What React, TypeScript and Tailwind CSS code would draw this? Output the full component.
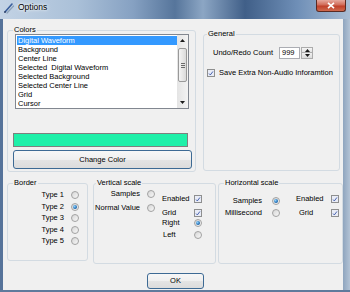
import type { ReactNode } from "react";

const colorItems = [
  "Digital Waveform",
  "Background",
  "Center Line",
  "Selected  Digital Waveform",
  "Selected Background",
  "Selected Center Line",
  "Grid",
  "Cursor",
];

function Radio({ on = false }: { on?: boolean }) {
  return (
    <span className="flex h-[8px] w-[8px] shrink-0 items-center justify-center rounded-full border border-[#a2a2a2] bg-[linear-gradient(135deg,#d6d6d6,#f8f8f8)]">
      {on && (
        <span className="h-[4px] w-[4px] rounded-full bg-[radial-gradient(circle_at_35%_35%,#8fd3ff,#0e5aa4_75%)]" />
      )}
    </span>
  );
}

function Check() {
  return (
    <span className="flex h-[8px] w-[8px] shrink-0 items-center justify-center border border-[#8e8f8f] bg-[#e9ecf6]">
      <svg viewBox="0 0 8 8" className="h-[7px] w-[7px]">
        <path d="M1.4 4.1 L3.1 5.9 L6.6 1.3" fill="none" stroke="#3652a6" strokeWidth="1.2" />
      </svg>
    </span>
  );
}

function Tri({ up = false }: { up?: boolean }) {
  return (
    <svg viewBox="0 0 5 3" className="h-[3px] w-[5px]">
      <path d={up ? "M0 3 L2.5 0 L5 3 Z" : "M0 0 L2.5 3 L5 0 Z"} fill="#1a1a1a" />
    </svg>
  );
}

function Group({
  title,
  className,
  legend,
  children,
}: {
  title: string;
  className: string;
  legend: string;
  children: ReactNode;
}) {
  return (
    <fieldset className={`shrink-0 rounded-[3px] border border-[#d3dbe2] ${className}`}>
      <legend className={`px-[1px] leading-[10px] ${legend}`}>{title}</legend>
      {children}
    </fieldset>
  );
}

function WinButton({ label, className }: { label: string; className: string }) {
  return (
    <button
      className={`flex items-center justify-center rounded-[3px] border border-[#3d6a94] bg-[linear-gradient(180deg,#f7f7f7_0%,#efefef_50%,#e4e4e4_51%,#dcdcdc_100%)] text-[7.5px] leading-[10px] text-black ${className}`}
    >
      {label}
    </button>
  );
}

export default function App() {
  return (
    <div className="flex h-[292px] w-[350px] flex-col overflow-hidden bg-[#6d87a6] font-['Liberation_Sans',Arial,sans-serif] text-[7.5px] text-black">
      {/* Title bar */}
      <div className="flex h-[19px] shrink-0 items-start bg-[linear-gradient(90deg,#c3d3e5_0%,#aac0d8_22%,#86a1c2_38%,#56759b_50%,#8ca6c4_58%,#405f88_70%,#6f8fb7_85%,#a9bdd4_100%)]">
        <svg viewBox="0 0 12 12" className="ml-[3px] mt-[2px] h-[12px] w-[12px]">
          <path d="M2 10 L9 2" stroke="#3a5e9c" strokeWidth="1.6" strokeLinecap="round" />
          <path d="M4 11 L10.5 4" stroke="#8aa0b8" strokeWidth="1.2" strokeLinecap="round" />
          <path d="M1.5 10.5 L2.5 9.5" stroke="#1d2d4a" strokeWidth="1.2" />
        </svg>
        <span className="ml-[3px] mt-[2px] text-[8.5px] leading-[11px] [text-shadow:0_0_4px_#ffffff,0_0_2px_#ffffff]">
          Options
        </span>
        <div className="ml-auto mr-[4px] flex h-[12px] w-[30px] items-center justify-center rounded-b-[3px] border border-t-0 border-[#5a2a22] bg-[linear-gradient(180deg,#e6a99e_0%,#d16b58_45%,#c0402a_55%,#cf6a4e_100%)]">
          <svg viewBox="0 0 8 7" className="h-[7px] w-[8px]">
            <path d="M1 0.8 L7 6.2 M7 0.8 L1 6.2" stroke="#ffffff" strokeWidth="1.6" />
          </svg>
        </div>
      </div>

      {/* Body */}
      <div className="flex h-[271px] shrink-0">
        <div className="w-[3px] bg-[#56739a]" />
        <div className="flex w-[340px] flex-col bg-[#f0f0f0]">
          {/* Top row */}
          <div className="flex h-[153px] items-start">
            <Group title="Colors" className="ml-[4px] mt-[6px] h-[147px] w-[189px]" legend="ml-[5px]">
              <div className="ml-[7px] mt-[-1px] flex h-[75px] w-[174px] border border-[#828790] bg-white">
                <div className="flex-1 pl-[1px] pt-[1px]">
                  {colorItems.map((t, i) => (
                    <div
                      key={t}
                      className={`h-[9px] whitespace-pre pl-[1px] leading-[9px] ${
                        i === 0 ? "bg-[#3399ff] text-white" : "text-black"
                      }`}
                    >
                      {t}
                    </div>
                  ))}
                </div>
                <div className="flex w-[11px] flex-col bg-[linear-gradient(90deg,#e4e4e4,#f3f3f3)]">
                  <div className="flex h-[11px] items-center justify-center">
                    <Tri up />
                  </div>
                  <div className="mx-[1px] mt-[2px] flex h-[34px] flex-col items-center justify-center gap-[1px] rounded-[2px] border border-[#999999] bg-[linear-gradient(90deg,#f4f4f4,#dadada)]">
                    <span className="h-px w-[4px] bg-[#6b6b6b]" />
                    <span className="h-px w-[4px] bg-[#6b6b6b]" />
                    <span className="h-px w-[4px] bg-[#6b6b6b]" />
                  </div>
                  <div className="flex-1" />
                  <div className="flex h-[11px] items-center justify-center">
                    <Tri />
                  </div>
                </div>
              </div>
              <div className="ml-[5px] mt-[24px] h-[14px] w-[175px] border border-[#7f7f7f] bg-[#1ff0a9]" />
              <WinButton label="Change Color" className="ml-[5px] mt-[3px] h-[19px] w-[179px]" />
            </Group>

            <Group title="General" className="ml-[7px] mt-[10px] h-[142px] w-[137px]" legend="ml-[3px]">
              <div className="ml-[9px] mt-[8px] flex items-center">
                <span className="w-[66px] leading-[10px]">Undo/Redo Count</span>
                <div className="h-[12px] w-[21px] border border-[#abadb3] bg-white pl-[2px] leading-[10px]">
                  999
                </div>
                <div className="ml-[1px] flex h-[12px] w-[12px] flex-col">
                  <div className="flex h-[6px] items-center justify-center border border-[#acacac] bg-[linear-gradient(180deg,#f6f6f6,#e2e2e2)]">
                    <Tri up />
                  </div>
                  <div className="flex h-[6px] items-center justify-center border border-t-0 border-[#acacac] bg-[linear-gradient(180deg,#f0f0f0,#dcdcdc)]">
                    <Tri />
                  </div>
                </div>
              </div>
              <div className="ml-[3px] mt-[9px] flex h-[10px] items-center">
                <Check />
                <span className="ml-[4px] leading-[10px]">Save Extra Non-Audio Inforamtion</span>
              </div>
            </Group>
          </div>

          {/* Bottom row */}
          <div className="mt-[6px] flex h-[86px] items-start">
            <Group title="Border" className="ml-[4px] h-[83px] w-[81px]" legend="ml-[5px]">
              <div className="mt-[1.5px]">
                {[1, 2, 3, 4, 5].map((n) => (
                  <div key={n} className="flex h-[11.5px] items-center">
                    <span className="w-[56px] text-right leading-[10px]">Type {n}</span>
                    <span className="ml-[7px]">
                      <Radio on={n === 2} />
                    </span>
                  </div>
                ))}
              </div>
            </Group>

            <Group title="Vertical scale" className="ml-[5px] h-[86px] w-[123px]" legend="ml-[2px]">
              <div className="flex">
                <div className="flex flex-col gap-[2px]">
                  <div className="flex h-[12px] items-center">
                    <span className="w-[46px] text-right leading-[10px]">Samples</span>
                    <span className="ml-[7px]">
                      <Radio />
                    </span>
                  </div>
                  <div className="flex h-[12px] items-center">
                    <span className="w-[46px] text-right leading-[10px]">Normal Value</span>
                    <span className="ml-[7px]">
                      <Radio />
                    </span>
                  </div>
                </div>
                <div className="ml-[7px] flex flex-col">
                  <div className="mt-[6px] flex h-[10px] items-center">
                    <span className="w-[32px] leading-[10px]">Enabled</span>
                    <Check />
                  </div>
                  <div className="mt-[4px] flex h-[10px] items-center">
                    <span className="w-[32px] leading-[10px]">Grid</span>
                    <Check />
                  </div>
                  <div className="flex h-[10px] items-center">
                    <span className="w-[32px] leading-[10px]">Right</span>
                    <Radio on />
                  </div>
                  <div className="mt-[2px] flex h-[10px] items-center">
                    <span className="w-[32px] pl-[1px] leading-[10px]">Left</span>
                    <Radio />
                  </div>
                </div>
              </div>
            </Group>

            <Group title="Horizontal scale" className="ml-[2px] h-[86px] w-[125px]" legend="ml-[5px]">
              <div className="flex">
                <div className="flex flex-col">
                  <div className="mt-[8px] flex h-[10px] items-center">
                    <span className="w-[43px] text-right leading-[10px]">Samples</span>
                    <span className="ml-[10px]">
                      <Radio on />
                    </span>
                  </div>
                  <div className="mt-[2px] flex h-[10px] items-center">
                    <span className="w-[43px] text-right leading-[10px]">Millisecond</span>
                    <span className="ml-[10px]">
                      <Radio />
                    </span>
                  </div>
                </div>
                <div className="ml-[16px] flex flex-col">
                  <div className="mt-[6px] flex h-[10px] items-center">
                    <span className="w-[35px] leading-[10px]">Enabled</span>
                    <Check />
                  </div>
                  <div className="mt-[4px] flex h-[10px] items-center">
                    <span className="w-[35px] pl-[3px] leading-[10px]">Grid</span>
                    <Check />
                  </div>
                </div>
              </div>
            </Group>
          </div>

          <WinButton label="OK" className="ml-[144px] mt-[9px] h-[16px] w-[57px]" />
        </div>
        <div className="flex-1 bg-[linear-gradient(90deg,#8fa5be,#b3c3d5)]" />
      </div>
      <div className="h-[2px] shrink-0 bg-[#5f7a9c]" />
    </div>
  );
}
